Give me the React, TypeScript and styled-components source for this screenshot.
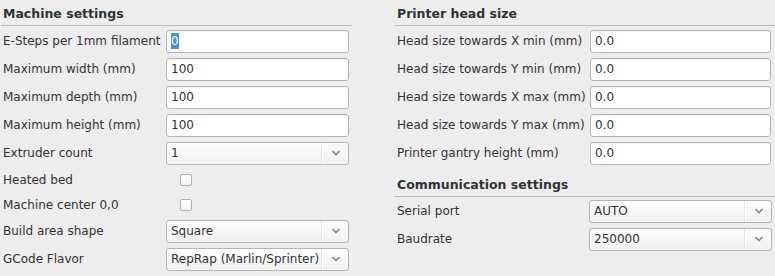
import * as React from 'react';
import styled, { createGlobalStyle } from 'styled-components';

const GlobalStyle = createGlobalStyle`
	html, body {
		margin: 0;
		padding: 0;
		background: #ededed;
	}
	body {
		font-family: "DejaVu Sans", sans-serif;
		font-size: 12px;
		color: #2e3436;
	}
`;

const Page = styled.div`
	display: flex;
	width: 775px;
	height: 276px;
	background: #ededed;
	overflow: hidden;
`;

const Column = styled.div<{ $left: number; $width: number }>`
	margin-left: ${props => props.$left}px;
	width: ${props => props.$width}px;
	display: flex;
	flex-direction: column;
`;

const SectionTitle = styled.div<{ $top?: number; $bottom?: number }>`
	margin-top: ${props => props.$top || 0}px;
	margin-bottom: ${props => (props.$bottom === undefined ? 1 : props.$bottom)}px;
	padding: 6px 0 3px 2px;
	line-height: 16px;
	font-size: 12.5px;
	font-weight: bold;
	color: #2e3436;
	border-bottom: 1px solid #b8b8b8;
`;

const Rows = styled.div<{ $labelWidth: number; $controlWidth: number }>`
	display: grid;
	grid-template-columns: ${props => props.$labelWidth}px ${props => props.$controlWidth}px;
`;

const Label = styled.div<{ $h: number }>`
	height: ${props => props.$h}px;
	display: flex;
	align-items: center;
	padding-left: 2px;
	white-space: nowrap;
	color: #333;
`;

const Cell = styled.div<{ $h: number }>`
	height: ${props => props.$h}px;
	display: flex;
	align-items: center;
`;

const TextBox = styled.div`
	box-sizing: border-box;
	width: 100%;
	height: 23px;
	background: #fff;
	border: 1px solid #b4b4b4;
	border-radius: 3px;
	box-shadow: inset 0 1px 1px rgba(0, 0, 0, 0.06);
	padding-left: 4px;
	display: flex;
	align-items: center;
	color: #2e3436;
`;

const Selected = styled.span`
	background: #4a90d9;
	color: #fff;
	padding: 1px 0;
`;

const SelectBox = styled.div`
	box-sizing: border-box;
	width: 100%;
	height: 23px;
	background: linear-gradient(180deg, #fbfbfb 0%, #f2f2f2 100%);
	border: 1px solid #b4b4b4;
	border-radius: 3px;
	display: flex;
	align-items: stretch;
	color: #2e3436;
`;

const SelectText = styled.div`
	flex: 1;
	padding-left: 4px;
	display: flex;
	align-items: center;
	white-space: nowrap;
	overflow: hidden;
`;

const SelectButton = styled.div`
	width: 25px;
	border-left: 1px solid #fff;
	box-shadow: -1px 0 0 #e6e6e6;
	display: flex;
	align-items: center;
	justify-content: center;
`;

const CheckBox = styled.div`
	box-sizing: border-box;
	width: 12px;
	height: 12px;
	margin-left: 14px;
	border: 1px solid #b0b0b0;
	border-radius: 2px;
	background: linear-gradient(180deg, #ffffff 0%, #f3f3f3 100%);
`;

const Chevron = () => (
	<svg width="10" height="6" viewBox="0 0 10 6">
		<path d="M1.5 1 L5 4.5 L8.5 1" fill="none" stroke="#858585" strokeWidth="1.6" />
	</svg>
);

type Field =
	| { label: string; kind: 'text'; value: string; selected?: boolean }
	| { label: string; kind: 'select'; value: string }
	| { label: string; kind: 'check' };

const renderControl = (f: Field) => {
	if (f.kind === 'text') {
		return <TextBox>{f.selected ? <Selected>{f.value}</Selected> : f.value}</TextBox>;
	}
	if (f.kind === 'select') {
		return (
			<SelectBox>
				<SelectText>{f.value}</SelectText>
				<SelectButton><Chevron /></SelectButton>
			</SelectBox>
		);
	}
	return <CheckBox />;
};

const FieldRows: React.FC<{ fields: Field[]; labelWidth: number; controlWidth: number }> = ({ fields, labelWidth, controlWidth }) => (
	<Rows $labelWidth={labelWidth} $controlWidth={controlWidth}>
		{fields.map((f, i) => {
			const h = f.kind === 'check' ? 25 : 28;
			return (
				<React.Fragment key={i}>
					<Label $h={h}>{f.label}</Label>
					<Cell $h={h}>{renderControl(f)}</Cell>
				</React.Fragment>
			);
		})}
	</Rows>
);

const machineFields: Field[] = [
	{ label: 'E-Steps per 1mm filament', kind: 'text', value: '0', selected: true },
	{ label: 'Maximum width (mm)', kind: 'text', value: '100' },
	{ label: 'Maximum depth (mm)', kind: 'text', value: '100' },
	{ label: 'Maximum height (mm)', kind: 'text', value: '100' },
	{ label: 'Extruder count', kind: 'select', value: '1' },
	{ label: 'Heated bed', kind: 'check' },
	{ label: 'Machine center 0,0', kind: 'check' },
	{ label: 'Build area shape', kind: 'select', value: 'Square' },
	{ label: 'GCode Flavor', kind: 'select', value: 'RepRap (Marlin/Sprinter)' },
];

const headFields: Field[] = [
	{ label: 'Head size towards X min (mm)', kind: 'text', value: '0.0' },
	{ label: 'Head size towards Y min (mm)', kind: 'text', value: '0.0' },
	{ label: 'Head size towards X max (mm)', kind: 'text', value: '0.0' },
	{ label: 'Head size towards Y max (mm)', kind: 'text', value: '0.0' },
	{ label: 'Printer gantry height (mm)', kind: 'text', value: '0.0' },
];

const commFields: Field[] = [
	{ label: 'Serial port', kind: 'select', value: 'AUTO' },
	{ label: 'Baudrate', kind: 'select', value: '250000' },
];

export default function App() {
	return (
		<>
			<GlobalStyle />
			<Page>
				<Column $left={1} $width={351}>
					<SectionTitle>Machine settings</SectionTitle>
					<FieldRows fields={machineFields} labelWidth={165} controlWidth={183} />
				</Column>
				<Column $left={43} $width={380}>
					<SectionTitle>Printer head size</SectionTitle>
					<FieldRows fields={headFields} labelWidth={195} controlWidth={181} />
					<SectionTitle $top={4} $bottom={0}>Communication settings</SectionTitle>
					<FieldRows fields={commFields} labelWidth={194} controlWidth={183} />
				</Column>
			</Page>
		</>
	);
}
